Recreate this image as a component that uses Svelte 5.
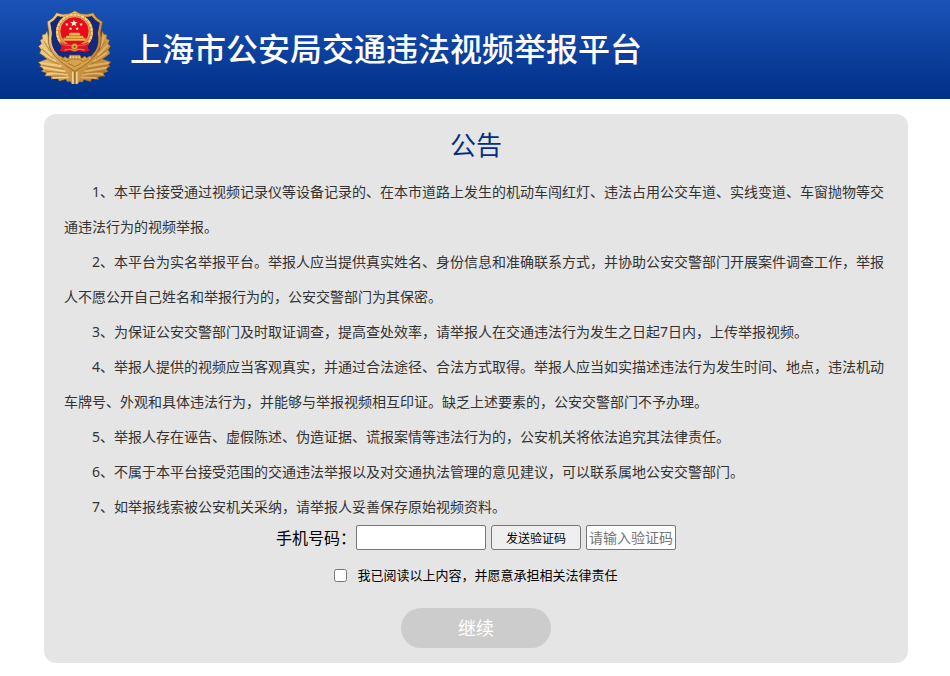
<script lang="ts">
  const notices: string[] = [
    '1、本平台接受通过视频记录仪等设备记录的、在本市道路上发生的机动车闯红灯、违法占用公交车道、实线变道、车窗抛物等交通违法行为的视频举报。',
    '2、本平台为实名举报平台。举报人应当提供真实姓名、身份信息和准确联系方式，并协助公安交警部门开展案件调查工作，举报人不愿公开自己姓名和举报行为的，公安交警部门为其保密。',
    '3、为保证公安交警部门及时取证调查，提高查处效率，请举报人在交通违法行为发生之日起7日内，上传举报视频。',
    '4、举报人提供的视频应当客观真实，并通过合法途径、合法方式取得。举报人应当如实描述违法行为发生时间、地点，违法机动车牌号、外观和具体违法行为，并能够与举报视频相互印证。缺乏上述要素的，公安交警部门不予办理。',
    '5、举报人存在诬告、虚假陈述、伪造证据、谎报案情等违法行为的，公安机关将依法追究其法律责任。',
    '6、不属于本平台接受范围的交通违法举报以及对交通执法管理的意见建议，可以联系属地公安交警部门。',
    '7、如举报线索被公安机关采纳，请举报人妥善保存原始视频资料。',
  ];
  let phone = $state('');
  let code = $state('');
  let agreed = $state(false);
</script>

<header class="header">
  <svg class="badge" viewBox="50 28 224 228" aria-hidden="true">
    <defs>
      <linearGradient id="gold" x1="0" y1="0" x2="1" y2="1">
        <stop offset="0" stop-color="#f3d793" />
        <stop offset="0.45" stop-color="#d9a552" />
        <stop offset="0.75" stop-color="#c48a3c" />
        <stop offset="1" stop-color="#a96f28" />
      </linearGradient>
    </defs>
    <!-- pine branches -->
    <path
      d="M80 94 L74 104 L65 105 L66 118 L59 121 L63 132 L54 140 L62 150 L57 161 L68 168 L80 178 L53 188 L62 196 L57 200 L70 208 L62 215 L78 220 L72 229 L92 230 L92 239 L112 236 L116 245 L136 239 L140 247 L152 245 L155 252 H171 L174 246 L186 248 L190 240 L210 246 L214 237 L234 240 L234 231 L254 230 L248 221 L264 215 L256 208 L269 200 L264 195 L272 187 L246 178 L260 168 L269 161 L263 150 L270 140 L263 132 L267 121 L258 118 L259 105 L250 104 L245 94 L236 150 L162 214 L90 150 Z"
      fill="url(#gold)"
      stroke="#76501f"
      stroke-width="1"
    />
    <g fill="none" stroke="#efcd88" stroke-width="6" stroke-linecap="round">
      <path d="M76 112 L85 140 M65 138 L92 166 M67 160 L104 184" />
      <path d="M62 190 L120 199 M69 204 L132 215 M80 224 Q110 216 140 226 M100 234 L142 233" />
    </g>
    <g fill="none" stroke="#e0b163" stroke-width="6" stroke-linecap="round">
      <path d="M249 112 L240 140 M260 138 L233 166 M258 160 L221 184" />
      <path d="M262 190 L205 199 M257 204 L194 215 M246 224 Q216 216 186 226 M226 234 L184 233" />
    </g>
    <g fill="none" stroke="#9c6d2e" stroke-width="2">
      <path d="M70 124 L90 156 M64 148 L98 178 M80 178 L116 194 M66 197 L130 209 M74 214 L138 221 M94 230 L142 229" />
      <path d="M255 124 L235 156 M261 148 L227 178 M246 178 L209 194 M260 197 L196 209 M252 214 L188 221 M232 230 L184 229" />
    </g>
    <path d="M145 211 H181 L176 246 L172 253 H154 L150 246 Z" fill="#c99349" />
    <path d="M157 216 V252 M169 216 V252" stroke="#f9df9c" stroke-width="4" />
    <path d="M163 216 V252" stroke="#73470d" stroke-width="2" />
    <!-- shield -->
    <path
      d="M163 33 Q145 46 122 43 L108 39 Q98 58 80 66 L85 100 Q79 133 94 157 Q113 187 163 215 Q213 187 231 157 Q247 133 240 100 L246 66 Q228 58 218 39 L203 43 Q181 46 163 33 Z"
      fill="url(#gold)"
      stroke="#76501f"
      stroke-width="2"
    />
    <path
      d="M163 42 Q145 54 121 51 L111 49 Q103 62 88 70 L93 101 Q87 132 101 153 Q117 178 163 204 Q209 178 225 153 Q238 132 232 101 L238 70 Q223 62 214 49 L204 51 Q181 54 163 42 Z"
      fill="#172878"
    />
    <path d="M88 70 L93 101 Q87 132 101 153 Q117 178 163 204" fill="none" stroke="#ffe8ae" stroke-width="2" />
    <!-- national emblem -->
    <circle cx="162" cy="97" r="56" fill="#c88d37" />
    <circle cx="162" cy="97" r="52" fill="none" stroke="#f4d38b" stroke-width="6" stroke-dasharray="10 2" />
    <circle cx="162" cy="95" r="44" fill="#e60b1d" stroke="#fadb88" stroke-width="2" />
    <path
      d="M160 60 L163 67 L171 67 L165 72 L167 80 L160 75 L153 80 L155 72 L149 67 L157 67 Z"
      fill="#fff0bd"
    />
    <g fill="#fff0bd">
      <path d="M139 69 l1.500 3 3.500 .5 -2.500 2.500 .5 3.500 -3 -2 -3 2 .5 -3.500 -2.500 -2.500 3.500 -.5 Z" />
      <path d="M182 69 l1.500 3 3.500 .5 -2.500 2.500 .5 3.500 -3 -2 -3 2 .5 -3.500 -2.500 -2.500 3.500 -.5 Z" />
      <path d="M150 82 l1.500 3 3.500 .5 -2.500 2.500 .5 3.500 -3 -2 -3 2 .5 -3.500 -2.500 -2.500 3.500 -.5 Z" />
      <path d="M170 82 l1.500 3 3.500 .5 -2.500 2.500 .5 3.500 -3 -2 -3 2 .5 -3.500 -2.500 -2.500 3.500 -.5 Z" />
    </g>
    <path
      d="M145 102 L149 99 H175 L180 102 L177 108 H187 L190 114 H195 V123 H129 V114 H135 L138 108 H147 Z"
      fill="#eeb750"
    />
    <path d="M143 108 H182 M131 116 H193" stroke="#a76317" stroke-width="2" />
    <path d="M119 126 Q140 139 162 130 Q184 139 205 126 L202 146 L208 153 Q190 159 174 153 L162 158 L148 153 Q132 159 117 153 L123 144 Z" fill="#dc1522" />
    <path d="M119 130 Q139 142 162 135 Q185 142 205 130" fill="none" stroke="#ed6a43" stroke-width="3" />
    <circle cx="162" cy="141" r="9" fill="#dca344" stroke="#b9742a" stroke-width="3" stroke-dasharray="4 2" />
    <circle cx="162" cy="141" r="3" fill="#8b4616" />
    <path d="M132 151 Q148 145 162 153 Q177 145 192 151" fill="none" stroke="#e9a54b" stroke-width="3" />
    <!-- great wall -->
    <path
      d="M113 177 L119 169 L128 176 L133 171 L143 178 L148 167 H178 L183 177 L193 170 L199 176 L208 169 L214 176 Q202 190 188 198 L163 213 L137 197 Q121 188 113 177 Z"
      fill="#d7a34b"
      stroke="#b98638"
      stroke-width="2"
    />
    <path d="M121 177 L139 186 L151 178 H176 L188 186 L205 178 M143 191 L163 201 L182 191" fill="none" stroke="#8a6029" stroke-width="2" />
    <path d="M150 170 V176 M158 170 V176 M167 170 V176 M176 170 V176" stroke="#fae0a1" stroke-width="3" />
  </svg>
  <h1>上海市公安局交通违法视频举报平台</h1>
</header>

<main class="notice">
  <h2>公告</h2>
  {#each notices as notice}
    <p>{notice}</p>
  {/each}
  <form onsubmit={(e) => e.preventDefault()}>
    <div class="verify">
      <label for="phone">手机号码：</label>
      <input id="phone" class="phone" type="tel" bind:value={phone} />
      <button class="send" type="button">发送验证码</button>
      <input class="code" type="text" placeholder="请输入验证码" aria-label="请输入验证码" bind:value={code} />
    </div>
    <label class="agree">
      <input type="checkbox" bind:checked={agreed} />
      我已阅读以上内容，并愿意承担相关法律责任
    </label>
    <button class="next" class:active={agreed} type="submit">继续</button>
  </form>
</main>

<style>
  :global(body) {
    margin: 0;
    background: #fff;
    font-family: 'Noto Sans', 'Noto Sans CJK SC', sans-serif;
  }
  .header {
    display: flex;
    align-items: center;
    gap: 18px;
    box-sizing: border-box;
    height: 99px;
    padding: 0 37px 6px;
    background: linear-gradient(#1b53b7, #002f87);
  }
  .badge {
    flex: none;
    width: 75px;
    height: 76px;
  }
  h1 {
    margin: 4px 0 0;
    color: #fff;
    font-size: 32px;
    font-weight: 500;
    line-height: 40px;
  }
  .notice {
    margin: 15px 42px 13px 44px;
    padding: 13px 20px 15px;
    border-radius: 12px;
    background: #e5e5e5;
  }
  h2 {
    margin: 0 0 11px;
    color: #003087;
    font-size: 26px;
    font-weight: 400;
    line-height: 36px;
    text-align: center;
  }
  p {
    margin: 0;
    color: #333;
    font-size: 14px;
    line-height: 35px;
    text-indent: 28px;
  }
  form {
    display: flex;
    flex-direction: column;
    align-items: center;
    margin-top: 1px;
  }
  .verify {
    display: flex;
    align-items: center;
    font-size: 16px;
    line-height: 24px;
  }
  .verify input,
  .send {
    box-sizing: border-box;
    height: 25px;
    border: 1px solid #767676;
    border-radius: 2px;
    font-family: inherit;
  }
  .verify input {
    padding: 1px 2px;
    background: #fff;
    font-size: 14px;
  }
  .phone {
    width: 130px;
  }
  .send {
    width: 90px;
    margin: 0 5px;
    padding: 0;
    border-radius: 3px;
    background: #efefef;
    color: #000;
    font-size: 12px;
  }
  .code {
    width: 90px;
  }
  .code::placeholder {
    color: #757575;
  }
  .agree {
    display: flex;
    align-items: center;
    gap: 10px;
    margin: 15px 0 23px;
    color: #000;
    font-size: 13px;
    line-height: 20px;
  }
  .agree input {
    width: 13px;
    height: 13px;
    margin: 0;
  }
  .next {
    width: 150px;
    height: 40px;
    padding: 0 0 2px;
    border: none;
    border-radius: 20px;
    background: #ccc;
    color: #fff;
    font-family: inherit;
    font-size: 18px;
  }
  .next.active {
    background: #003087;
  }
</style>
